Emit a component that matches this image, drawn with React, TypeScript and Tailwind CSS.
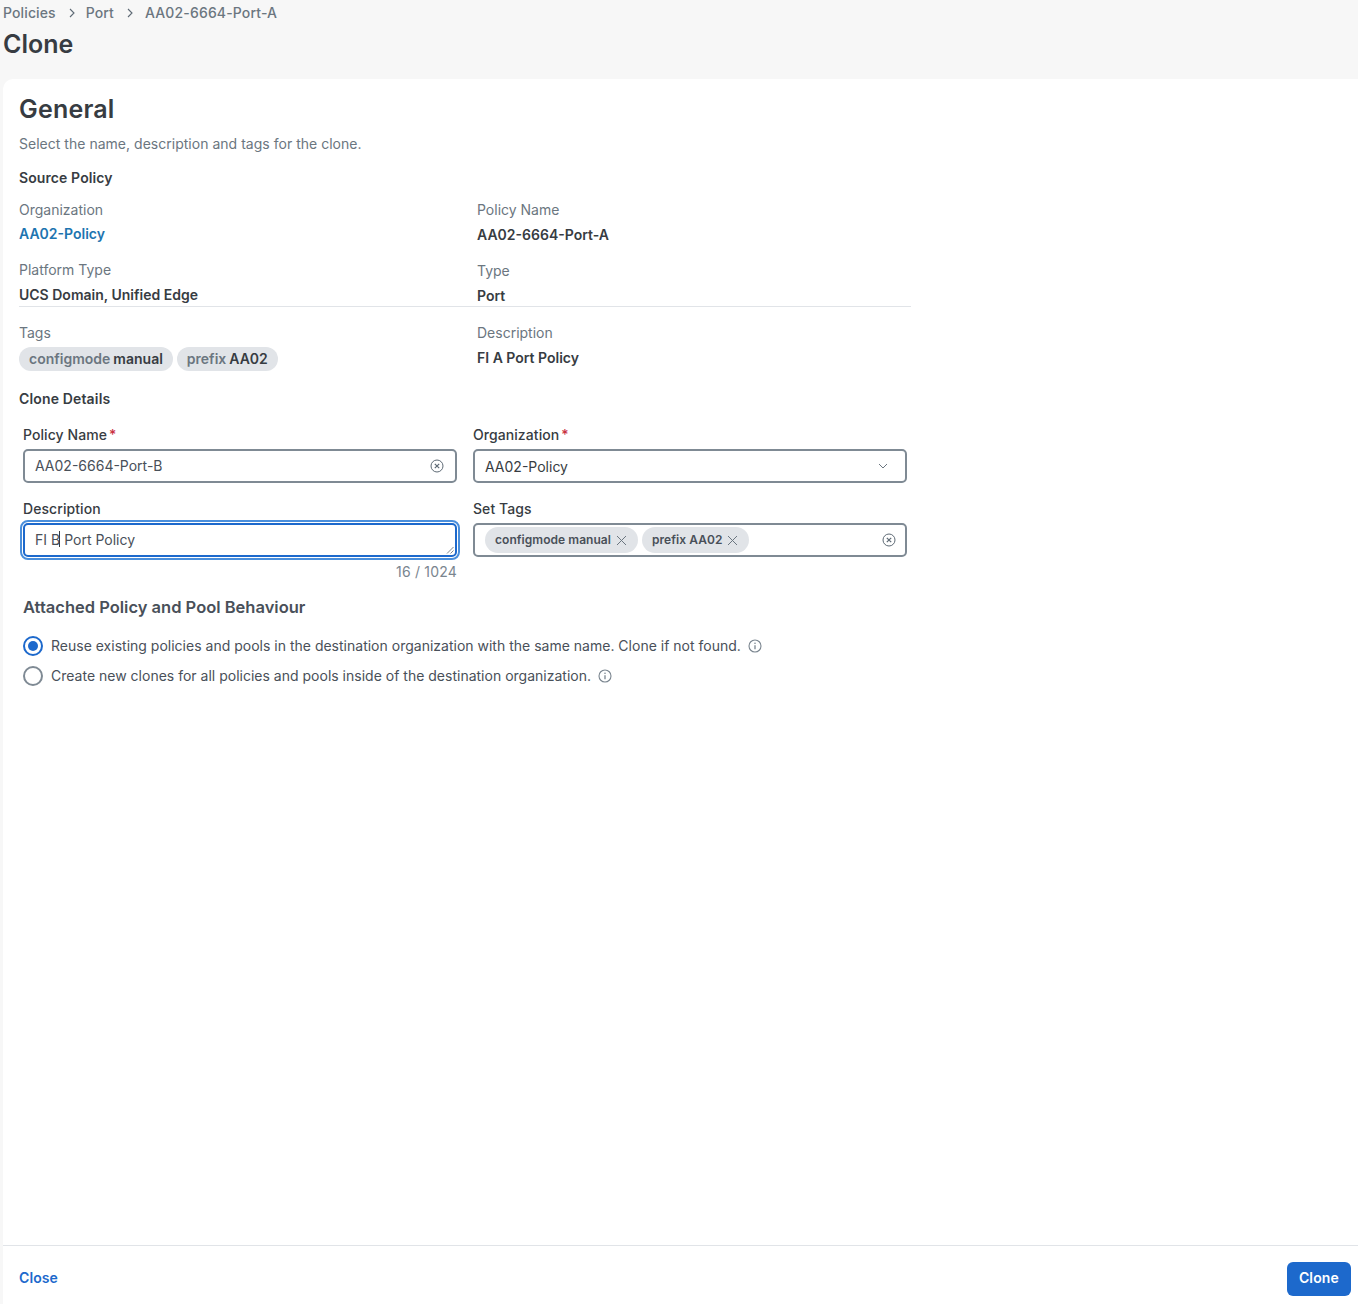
import React from "react";

const ClearIcon = () => (
  <svg width="14" height="14" viewBox="0 0 14 14" fill="none" stroke="#5e6a75" strokeWidth="1">
    <circle cx="7" cy="7" r="6" />
    <path d="M4.8 4.8l4.4 4.4M9.2 4.8l-4.4 4.4" strokeWidth="1.2" />
  </svg>
);

const InfoIcon = () => (
  <svg width="14" height="14" viewBox="0 0 14 14" fill="none" stroke="#7a858f" strokeWidth="1.1">
    <circle cx="7" cy="7" r="6" />
    <path d="M7 6.2v4" strokeWidth="1.3" />
    <circle cx="7" cy="4.2" r="0.8" fill="#7a858f" stroke="none" />
  </svg>
);

const Chevron = () => (
  <svg width="10" height="10" viewBox="0 0 10 10" fill="none" stroke="#5e6a75" strokeWidth="1.1">
    <path d="M3 1l4 4-4 4" />
  </svg>
);

const X = () => (
  <svg width="11" height="11" viewBox="0 0 11 11" fill="none" stroke="#6b7680" strokeWidth="1">
    <path d="M1 1l9 9M10 1l-9 9" />
  </svg>
);

const Info = ({ label, value, link, right }: { label: string; value: string; link?: boolean; right?: boolean }) => (
  <div>
    <div className="h-[20px] text-[14px] leading-[20px] text-[#6b7680]">{label}</div>
    <div className={`${right ? "mt-[5px]" : "mt-[4px]"} h-[20px] text-[14px] leading-[20px] font-semibold ${link ? "text-[#1d74b0]" : "text-[#373c42]"}`}>{value}</div>
  </div>
);

const Req = () => <span className="ml-[2px] text-[#c9303f]">*</span>;

const Label = ({ children }: { children: React.ReactNode }) => (
  <div className="h-[20px] text-[14px] leading-[20px] font-medium tracking-[0.07px] text-[#373c42]">{children}</div>
);

const Tag = ({ k, v }: { k: string; v: string }) => (
  <span className="flex h-[24px] items-center gap-[3px] rounded-full bg-[#e1e4e8] px-[10px] pb-[2px] text-[14px] font-semibold text-[#6b7680]">
    {k} <span className="text-[#373c42]">{v}</span>
  </span>
);

const EditTag = ({ text }: { text: string }) => (
  <span className="flex h-[26px] items-center gap-[5px] rounded-full bg-[#e1e4e8] pl-[10px] pr-[11px] text-[12px] font-semibold tracking-[0.05px] text-[#495059]">
    {text} <X />
  </span>
);

const Radio = ({ on, children }: { on?: boolean; children: React.ReactNode }) => (
  <div className="flex h-[30px] items-center">
    <span className={`flex h-[20px] w-[20px] items-center justify-center rounded-full border-2 ${on ? "border-[#1d69cc]" : "border-[#7f8a94]"}`}>
      {on && <span className="h-[10px] w-[10px] rounded-full bg-[#1d69cc]" />}
    </span>
    <span className="ml-[8px] pb-[2px] text-[14px] tracking-[0.005px] text-[#495059]">{children}</span>
    <span className="ml-[7px]"><InfoIcon /></span>
  </div>
);

export default function App() {
  return (
    <div className="flex h-[1304px] w-full flex-col overflow-hidden bg-[#f7f7f7] font-['Inter',sans-serif]">
      <header className="h-[79px] shrink-0 pl-[3px]">
        <div className="flex h-[25px] items-center text-[14px] font-medium tracking-[0.12px] text-[#6b7680]">
          <span>Policies</span>
          <span className="ml-[11px] mr-[9px]"><Chevron /></span>
          <span>Port</span>
          <span className="ml-[11px] mr-[10px]"><Chevron /></span>
          <span className="tracking-[0.15px]">AA02-6664-Port-A</span>
        </div>
        <h1 className="mt-[2px] text-[25px] leading-[34px] font-semibold text-[#373c42]">Clone</h1>
      </header>

      <main className="ml-[3px] flex flex-1 flex-col rounded-tl-[10px] bg-white">
        <div className="flex-1 pl-[16px] pt-[14px]">
          <h2 className="h-[32px] text-[25px] leading-[32px] font-semibold tracking-[0.2px] text-[#373c42]">General</h2>
          <p className="mt-[9px] text-[14px] leading-[20px] tracking-[0.02px] text-[#6b7680]">Select the name, description and tags for the clone.</p>
          <h3 className="mt-[14px] text-[14px] leading-[20px] font-semibold tracking-[0.1px] text-[#373c42]">Source Policy</h3>

          <div className="mt-[12px] w-[892px]">
            <div className="grid grid-cols-[458px_434px]">
              <Info label="Organization" value="AA02-Policy" link />
              <Info label="Policy Name" value="AA02-6664-Port-A" right />
            </div>
            <div className="mt-[15px] grid grid-cols-[458px_434px] border-b border-[#e1e4e8]">
              <div>
                <div className="h-[20px] text-[14px] leading-[20px] text-[#6b7680]">Platform Type</div>
                <div className="mt-[5px] h-[20px] text-[14px] leading-[20px] font-semibold text-[#373c42]">UCS Domain, Unified Edge</div>
              </div>
              <div className="pt-px">
                <div className="h-[20px] text-[14px] leading-[20px] text-[#6b7680]">Type</div>
                <div className="mt-[5px] h-[20px] text-[14px] leading-[20px] font-semibold text-[#373c42]">Port</div>
              </div>
            </div>
            <div className="mt-[16px] grid grid-cols-[458px_434px]">
              <div>
                <div className="h-[20px] text-[14px] leading-[20px] text-[#6b7680]">Tags</div>
                <div className="mt-[4px] flex gap-[4px]">
                  <Tag k="configmode" v="manual" />
                  <Tag k="prefix" v="AA02" />
                </div>
              </div>
              <div>
                <div className="h-[20px] text-[14px] leading-[20px] text-[#6b7680]">Description</div>
                <div className="mt-[5px] h-[20px] text-[14px] leading-[20px] font-semibold text-[#373c42]">FI A Port Policy</div>
              </div>
            </div>
          </div>

          <h3 className="mt-[18px] text-[14px] leading-[20px] font-semibold tracking-[0.15px] text-[#373c42]">Clone Details</h3>

          <div className="ml-[4px]">
            <div className="mt-[16px] grid w-[884px] grid-cols-[434px_434px] gap-x-[16px]">
              <div>
                <Label>Policy Name<Req /></Label>
                <div className="mt-[4px] flex h-[34px] items-center justify-between rounded-[5px] border-2 border-[#7f8a94] bg-white pl-[10px] pr-[11px] text-[14px] text-[#495059]">
                  <span className="pb-[2px]">AA02-6664-Port-B</span>
                  <ClearIcon />
                </div>
              </div>
              <div>
                <Label>Organization<Req /></Label>
                <div className="mt-[4px] flex h-[34px] items-center justify-between rounded-[5px] border-2 border-[#7f8a94] bg-white pl-[10px] pr-[17px] text-[14px] text-[#373c42]">
                  <span>AA02-Policy</span>
                  <svg width="10" height="7" viewBox="0 0 10 7" fill="none" stroke="#6b7680" strokeWidth="1"><path d="M1 1l4 4 4-4" /></svg>
                </div>
              </div>
            </div>

            <div className="mt-[16px] grid w-[884px] grid-cols-[434px_434px] gap-x-[16px]">
              <div>
                <Label>Description</Label>
                <div className="relative mt-[4px] flex h-[34px] items-center rounded-[5px] border-2 border-[#1d69cc] bg-white pb-[2px] pl-[10px] text-[14px] text-[#495059] outline-2 outline-offset-1 outline-[#4a8fdc]">
                  <span>FI B</span>
                  <span className="ml-[-1px] mr-[1px] h-[16px] w-px bg-[#373c42]" />
                  <span className="ml-[3px]">Port Policy</span>
                  <svg className="absolute bottom-[1px] right-[1px]" width="8" height="8" viewBox="0 0 8 8" stroke="#5e6a75" strokeWidth="0.8"><path d="M1 7.5L7.5 1M4.5 7.5L7.5 4.5" /></svg>
                </div>
                <div className="mt-[7px] text-right text-[14px] leading-[16px] tracking-[0.2px] text-[#7a858f]">16 / 1024</div>
              </div>
              <div>
                <Label>Set Tags</Label>
                <div className="mt-[4px] flex h-[34px] items-center rounded-[5px] border-2 border-[#7f8a94] bg-white pl-[10px] pr-[9px]">
                  <div className="flex flex-1 gap-[4px]">
                    <EditTag text="configmode manual" />
                    <EditTag text="prefix AA02" />
                  </div>
                  <ClearIcon />
                </div>
              </div>
            </div>

            <h3 className="mt-[15px] text-[16.5px] leading-[24px] font-semibold text-[#495059]">Attached Policy and Pool Behaviour</h3>
            <div className="mt-[12px]">
              <Radio on>Reuse existing policies and pools in the destination organization with the same name. Clone if not found.</Radio>
              <Radio>Create new clones for all policies and pools inside of the destination organization.</Radio>
            </div>
          </div>
        </div>

        <footer className="flex h-[59px] shrink-0 items-center justify-between border-t border-[#e1e4e8] pl-[16px] pr-[7px] pt-[8px]">
          <span className="pb-[4px] text-[14px] font-semibold tracking-[0.1px] text-[#1d69cc]">Close</span>
          <span className="flex h-[34px] items-center rounded-[6px] bg-[#1d69cc] px-[12px] pb-[3px] text-[14px] font-semibold tracking-[0.15px] text-white">Clone</span>
        </footer>
      </main>
    </div>
  );
}
